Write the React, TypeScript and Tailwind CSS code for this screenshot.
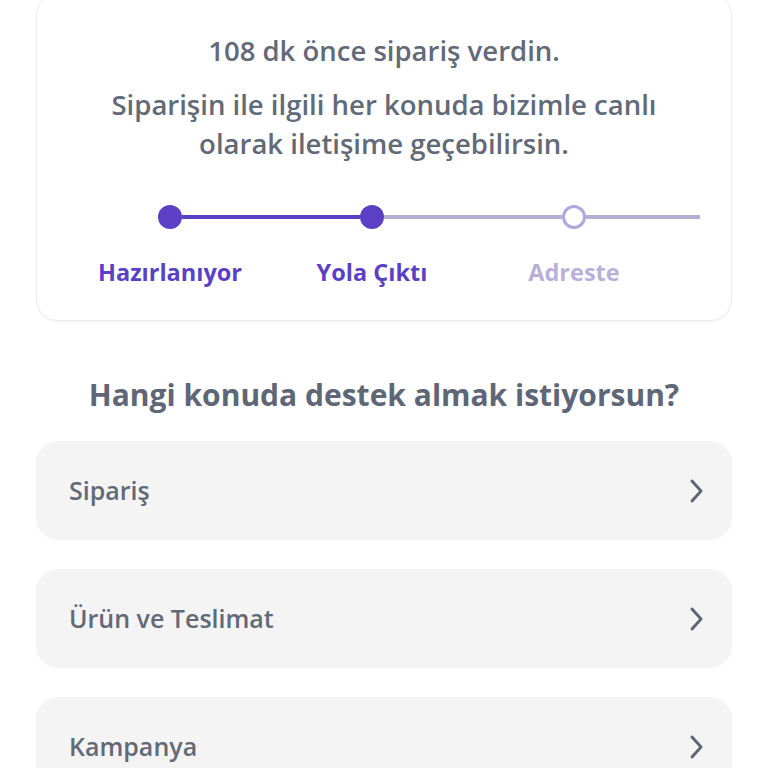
import React from "react";

const Chevron = () => (
  <svg width="24" height="28" viewBox="0 0 24 28" fill="none">
    <path d="M8 4 L17 14 L8 24" stroke="#5f6675" strokeWidth="3" strokeLinecap="round" strokeLinejoin="round" />
  </svg>
);

const Item = ({ label }: { label: string }) => (
  <div className="flex h-[99px] w-[696px] items-center justify-between rounded-[22px] bg-[#f4f4f5] pl-[33px] pr-[24px]">
    <span className="text-[25px] font-semibold text-[#626977]">{label}</span>
    <Chevron />
  </div>
);

export default function App() {
  return (
    <div className="relative h-[768px] w-[768px] overflow-hidden bg-white" style={{ fontFamily: '"Open Sans", sans-serif' }}>
      <div className="mx-auto mt-[-6px] w-[696px] rounded-[22px] border border-[#ececec] bg-white pb-[34px] pt-[37px] shadow-[0_1px_3px_rgba(0,0,0,0.04)]">
        <p className="text-center text-[27.5px] font-semibold leading-[38px] text-[#626977]">108 dk önce sipariş verdin.</p>
        <p className="mt-[15px] text-center text-[27.5px] font-semibold leading-[39px] text-[#626977]">
          Siparişin ile ilgili her konuda bizimle canlı
          <br />
          olarak iletişime geçebilirsin.
        </p>
        <div className="ml-[121px] mt-[42px] flex h-[24px] items-center">
          <div className="h-[24px] w-[24px] rounded-full bg-[#5b3fc4]" />
          <div className="h-[4px] w-[178px] bg-[#5b3fc4]" />
          <div className="h-[24px] w-[24px] rounded-full bg-[#5b3fc4]" />
          <div className="h-[4px] w-[178px] bg-[#b6aed6]" />
          <div className="h-[24px] w-[24px] rounded-full border-[3px] border-[#b3a6dd] bg-white" />
          <div className="h-[4px] w-[114px] bg-[#b6aed6]" />
        </div>
        <div className="ml-[32px] mt-[29px] flex">
          <div className="w-[202px] text-center text-[23.5px] font-bold leading-[28px] text-[#5b3fc4]">Hazırlanıyor</div>
          <div className="w-[202px] text-center text-[23.5px] font-bold leading-[28px] text-[#5b3fc4]">Yola Çıktı</div>
          <div className="w-[202px] text-center text-[23.5px] font-bold leading-[28px] text-[#b9b0d9]">Adreste</div>
        </div>
      </div>
      <h2 className="mt-[54px] text-center text-[30px] font-bold leading-[40px] text-[#5f6675]">Hangi konuda destek almak istiyorsun?</h2>
      <div className="mt-[26px] flex flex-col items-center gap-[29px]">
        <Item label="Sipariş" />
        <Item label="Ürün ve Teslimat" />
        <Item label="Kampanya" />
      </div>
    </div>
  );
}
